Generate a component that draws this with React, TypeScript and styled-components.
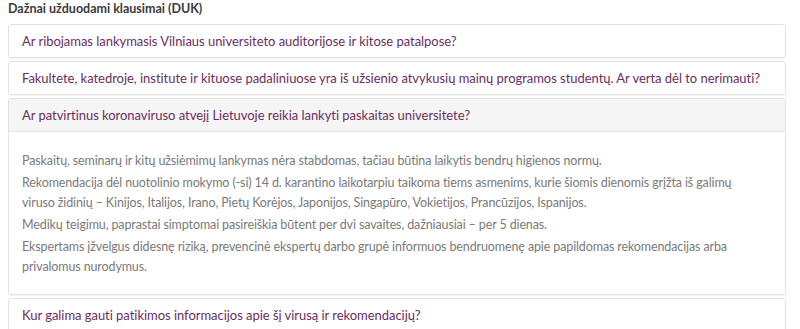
import { useState } from 'react';
import styled, { createGlobalStyle } from 'styled-components';

const GlobalStyle = createGlobalStyle`
    body {
        margin: 0;
        background: #fff;
        font-family: Lato, 'Open Sans', sans-serif;
    }
`;

type Faq = {
    question: string;
    answer?: string[];
};

const faqs: Faq[] = [
    {
        question: 'Ar ribojamas lankymasis Vilniaus universiteto auditorijose ir kitose patalpose?',
    },
    {
        question:
            'Fakultete, katedroje, institute ir kituose padaliniuose yra iš užsienio atvykusių mainų programos studentų. Ar verta dėl to nerimauti?',
    },
    {
        question: 'Ar patvirtinus koronaviruso atvejį Lietuvoje reikia lankyti paskaitas universitete?',
        answer: [
            'Paskaitų, seminarų ir kitų užsiėmimų lankymas nėra stabdomas, tačiau būtina laikytis bendrų higienos normų.',
            'Rekomendacija dėl nuotolinio mokymo (-si) 14 d. karantino laikotarpiu taikoma tiems asmenims, kurie šiomis dienomis grįžta iš galimų viruso židinių – Kinijos, Italijos, Irano, Pietų Korėjos, Japonijos, Singapūro, Vokietijos, Prancūzijos, Ispanijos.',
            'Medikų teigimu, paprastai simptomai pasireiškia būtent per dvi savaites, dažniausiai – per 5 dienas.',
            'Ekspertams įžvelgus didesnę riziką, prevencinė ekspertų darbo grupė informuos bendruomenę apie papildomas rekomendacijas arba privalomus nurodymus.',
        ],
    },
    {
        question: 'Kur galima gauti patikimos informacijos apie šį virusą ir rekomendacijų?',
    },
];

export default function App() {
    const [open, setOpen] = useState<number>(2);

    return (
        <Page>
            <GlobalStyle />
            <Title>Dažnai užduodami klausimai (DUK)</Title>
            <List>
                {faqs.map((item, index) => (
                    <Panel key={index}>
                        <Question
                            $open={open === index}
                            onClick={() => setOpen(open === index ? -1 : index)}
                        >
                            {item.question}
                        </Question>
                        {open === index && item.answer && (
                            <Answer>
                                {item.answer.map((p, i) => (
                                    <Para key={i}>{p}</Para>
                                ))}
                            </Answer>
                        )}
                    </Panel>
                ))}
            </List>
        </Page>
    );
}

const Page = styled.div`
    width: 778px;
    padding: 0 0 0 8px;
`;

const Title = styled.h4`
    margin: 0 0 6px;
    font-size: 12.5px;
    line-height: 18px;
    font-weight: 700;
    color: #3a3a3a;
`;

const List = styled.div`
    display: flex;
    flex-direction: column;
    gap: 3px;
`;

const Panel = styled.div`
    border: 1px solid #e2e2e2;
    border-radius: 3px;
    background: #fff;
    box-shadow: 0 1px 1px rgba(0, 0, 0, 0.04);
    overflow: hidden;
`;

const Question = styled.div<{ $open: boolean }>`
    height: 32px;
    display: flex;
    align-items: center;
    padding: 0 13px;
    font-size: 13px;
    letter-spacing: -0.04px;
    white-space: nowrap;
    color: #6c2e5d;
    cursor: pointer;
    background: ${p => (p.$open ? '#f5f5f5' : '#fff')};
    border-bottom: ${p => (p.$open ? '1px solid #e6e6e6' : 'none')};
`;

const Answer = styled.div`
    padding: 19px 13px 15px;
`;

const Para = styled.p`
    max-width: 725px;
    margin: 0 0 2px;
    font-size: 12.5px;
    letter-spacing: -0.12px;
    line-height: 20px;
    color: #7a7a7a;
`;
